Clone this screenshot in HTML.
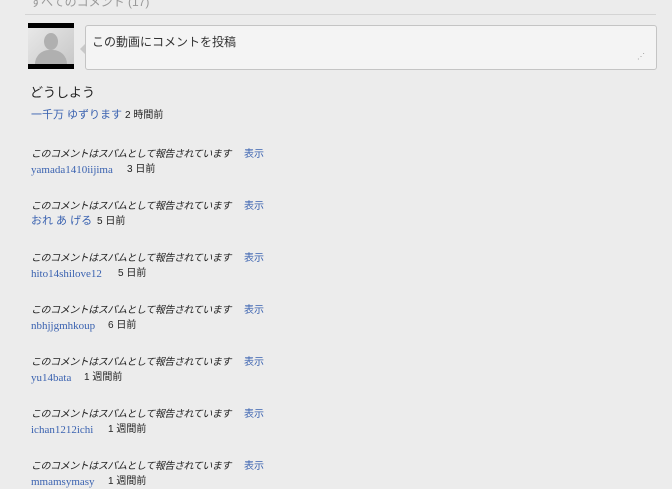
<!DOCTYPE html>
<html><head><meta charset="utf-8"><style>
body{margin:0;width:672px;height:487px;background:#ececec;overflow:hidden;font-family:"Liberation Sans","Noto Sans CJK JP",sans-serif;position:relative}
.a{position:absolute;white-space:nowrap;line-height:12px}
.spam{font-style:italic;font-size:10px;color:#222;letter-spacing:-0.45px}
.show{font-size:10px;color:#3a62b0}
.u{font-family:"Liberation Serif","Noto Sans CJK JP",serif;font-size:11px;color:#3a62b0}
.t{font-size:10px;color:#222}
.w{position:absolute;left:0;top:2px;width:672px;height:487px}
</style></head><body>
<div class="a" style="left:30px;top:-4px;font-size:12px;color:#999">すべてのコメント (17)</div>
<div class="a" style="left:25px;top:14px;width:631px;height:1px;background:#d4d4d4"></div>
<div class="a" style="left:28px;top:23px;width:46px;height:46px;background:#000"></div>
<div class="a" style="left:28px;top:28px;width:46px;height:36px;background:linear-gradient(135deg,#e8e8e8,#c8c8c8);overflow:hidden">
<div style="position:absolute;left:16px;top:5px;width:14px;height:17px;border-radius:50%;background:#b0b0b0"></div>
<div style="position:absolute;left:7px;top:22px;width:32px;height:20px;border-radius:14px 14px 0 0;background:#b0b0b0"></div></div>
<div class="a" style="left:80px;top:44px;width:0;height:0;border-top:5px solid transparent;border-bottom:5px solid transparent;border-right:5px solid #c8c8c8"></div>
<div class="a" style="left:85px;top:25px;width:570px;height:43px;background:#f4f4f4;border:1px solid #c4c4c4;border-radius:3px"></div>
<div class="a" style="left:92px;top:35px;font-size:12px;color:#333;line-height:14px">この動画にコメントを投稿</div>
<div class="a" style="left:637px;top:51px;font-size:8px;color:#999;letter-spacing:-1px">⋰</div>
<div class="a" style="left:30px;top:86px;font-size:13px;color:#222;line-height:14px">どうしよう</div>
<div class="w">
<div class="a" style="left:31px;top:107px;font-size:11px;color:#3a62b0">一千万 ゆずります</div>
<div class="a t" style="left:125px;top:108px">2 時間前</div>

<div class="a spam" style="left:31px;top:147px">このコメントはスパムとして報告されています</div><div class="a show" style="left:244px;top:147px">表示</div>
<div class="a u" style="left:31px;top:162px">yamada1410iijima</div><div class="a t" style="left:127px;top:162px">3 日前</div>

<div class="a spam" style="left:31px;top:199px">このコメントはスパムとして報告されています</div><div class="a show" style="left:244px;top:199px">表示</div>
<div class="a show" style="left:31px;top:213px;font-size:11px">おれ あ げる</div><div class="a t" style="left:97px;top:214px">5 日前</div>

<div class="a spam" style="left:31px;top:251px">このコメントはスパムとして報告されています</div><div class="a show" style="left:244px;top:251px">表示</div>
<div class="a u" style="left:31px;top:266px">hito14shilove12</div><div class="a t" style="left:118px;top:266px">5 日前</div>

<div class="a spam" style="left:31px;top:303px">このコメントはスパムとして報告されています</div><div class="a show" style="left:244px;top:303px">表示</div>
<div class="a u" style="left:31px;top:318px">nbhjjgmhkoup</div><div class="a t" style="left:108px;top:318px">6 日前</div>

<div class="a spam" style="left:31px;top:355px">このコメントはスパムとして報告されています</div><div class="a show" style="left:244px;top:355px">表示</div>
<div class="a u" style="left:31px;top:370px">yu14bata</div><div class="a t" style="left:84px;top:370px">1 週間前</div>

<div class="a spam" style="left:31px;top:407px">このコメントはスパムとして報告されています</div><div class="a show" style="left:244px;top:407px">表示</div>
<div class="a u" style="left:31px;top:422px">ichan1212ichi</div><div class="a t" style="left:108px;top:422px">1 週間前</div>

<div class="a spam" style="left:31px;top:459px">このコメントはスパムとして報告されています</div><div class="a show" style="left:244px;top:459px">表示</div>
<div class="a u" style="left:31px;top:474px">mmamsymasy</div><div class="a t" style="left:108px;top:474px">1 週間前</div>
</div>
</body></html>
